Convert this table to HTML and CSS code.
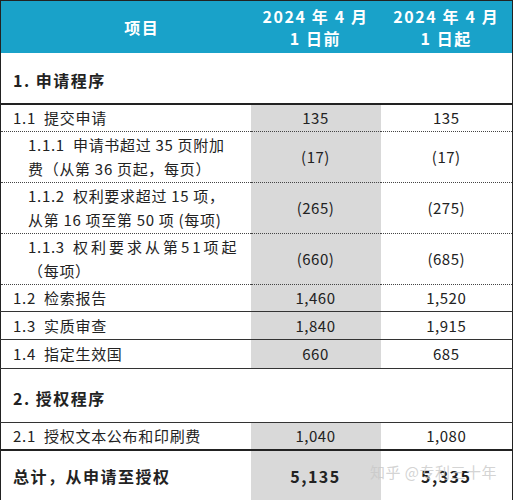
FILE: index.html
```html
<!DOCTYPE html>
<html lang="zh-CN">
<head>
  <meta charset="UTF-8" />
  <meta name="viewport" content="width=device-width, initial-scale=1" />
  <title>费用表</title>
  <link rel="stylesheet" href="styles.css">
</head>
<body>

  <div class="sheet">
    <table class="fees">
      <colgroup>
        <col class="c-item" />
        <col class="c-old" />
        <col class="c-new" />
      </colgroup>
      <thead>
        <tr class="head">
          <th class="h-item">项目</th>
          <th>2024 年 4 月<br>1 日前</th>
          <th>2024 年 4 月<br>1 日起</th>
        </tr>
      </thead>
      <tbody>
        <tr class="section sec-1">
          <td colspan="3">1. 申请程序</td>
        </tr>
        <tr class="row r-11 dotted">
          <td>1.1&nbsp; 提交申请</td>
          <td class="old">135</td>
          <td class="new">135</td>
        </tr>
        <tr class="row r-tall dotted">
          <td class="sub">1.1.1&nbsp; 申请书超过 35 页附加<br>费（从第 36 页起，每页）</td>
          <td class="old">(17)</td>
          <td class="new">(17)</td>
        </tr>
        <tr class="row r-tall dotted">
          <td class="sub">1.1.2&nbsp; 权利要求超过 15 项，<br>从第 16 项至第 50 项 (每项)</td>
          <td class="old">(265)</td>
          <td class="new">(275)</td>
        </tr>
        <tr class="row r-tall dotted">
          <td class="sub"><span class="num">1.1.3</span>&nbsp; <span class="wide">权利要求从第51项起</span><br>（每项）</td>
          <td class="old">(660)</td>
          <td class="new">(685)</td>
        </tr>
        <tr class="row r-12 solid">
          <td>1.2&nbsp; 检索报告</td>
          <td class="old">1,460</td>
          <td class="new">1,520</td>
        </tr>
        <tr class="row r-13 solid">
          <td>1.3&nbsp; 实质审查</td>
          <td class="old">1,840</td>
          <td class="new">1,915</td>
        </tr>
        <tr class="row r-14 solid">
          <td>1.4&nbsp; 指定生效国</td>
          <td class="old">660</td>
          <td class="new">685</td>
        </tr>
        <tr class="section sec-2 solid">
          <td colspan="3">2. 授权程序</td>
        </tr>
        <tr class="row r-21 thick">
          <td>2.1&nbsp; 授权文本公布和印刷费</td>
          <td class="old">1,040</td>
          <td class="new">1,080</td>
        </tr>
        <tr class="total">
          <td>总计，从申请至授权</td>
          <td class="old">5,135</td>
          <td class="new">5,335</td>
        </tr>
      </tbody>
    </table>
    <div class="watermark">知乎 @专利三十年</div>
  </div>

</body>
</html>
```

FILE: styles.css
```css
body {
  margin: 0;
  background: #ffffff;
  font-family: "Noto Sans CJK SC", "Noto Sans", sans-serif;
  color: #222;
}
.sheet {
  position: relative;
  width: 512px;
}
.fees {
  width: 512px;
  border-collapse: collapse;
  table-layout: fixed;
  border: 1px solid #222;
  font-size: 15px;
  letter-spacing: 0.7px;
}
.c-item { width: 250px; }
.c-old { width: 130px; }
.c-new { width: 132px; }

.fees td,
.fees th {
  padding: 0;
  vertical-align: middle;
}

/* header band */
.head th {
  background: #19a2c9;
  color: #ffffff;
  font-size: 16px;
  font-weight: bold;
  letter-spacing: 1.6px;
  line-height: 22px;
  height: 52px;
  text-align: center;
}
.head th.h-item {
  padding-left: 32px;
}

/* section titles */
.section td {
  font-size: 16px;
  font-weight: bold;
  letter-spacing: 1.5px;
  padding-left: 12px;
  padding-top: 4px;
}
.sec-1 td { height: 46px; border-bottom: 2px solid #222; }
.sec-2 td { height: 49px; }

/* body rows */
.row td {
  padding-left: 12px;
  line-height: 24px;
}
.row td.old,
.row td.new {
  padding-left: 0;
  text-align: center;
  letter-spacing: 0.5px;
}
.row td.sub {
  padding-left: 27px;
}
.wide {
  letter-spacing: 3px;
}
.old {
  background: #d9d9d9;
}
.r-11 td { height: 26px; }
.r-tall td { height: 50px; }
.r-12 td { height: 26px; }
.r-13 td { height: 27px; }
.r-14 td { height: 28px; }
.r-21 td { height: 26px; }

.dotted td { border-bottom: 1px dotted #444; }
.solid td { border-bottom: 1px solid #333; }
.thick td { border-bottom: 2px solid #222; }

/* grand total */
.total td {
  height: 50px;
  font-size: 16px;
  font-weight: bold;
  letter-spacing: 1.5px;
  padding-left: 12px;
}
.total td.old,
.total td.new {
  padding-left: 0;
  text-align: center;
}

.watermark {
  position: absolute;
  left: 370px;
  top: 461px;
  font-size: 15px;
  letter-spacing: 0.5px;
  color: rgba(200, 200, 200, 0.8);
  pointer-events: none;
}
```
